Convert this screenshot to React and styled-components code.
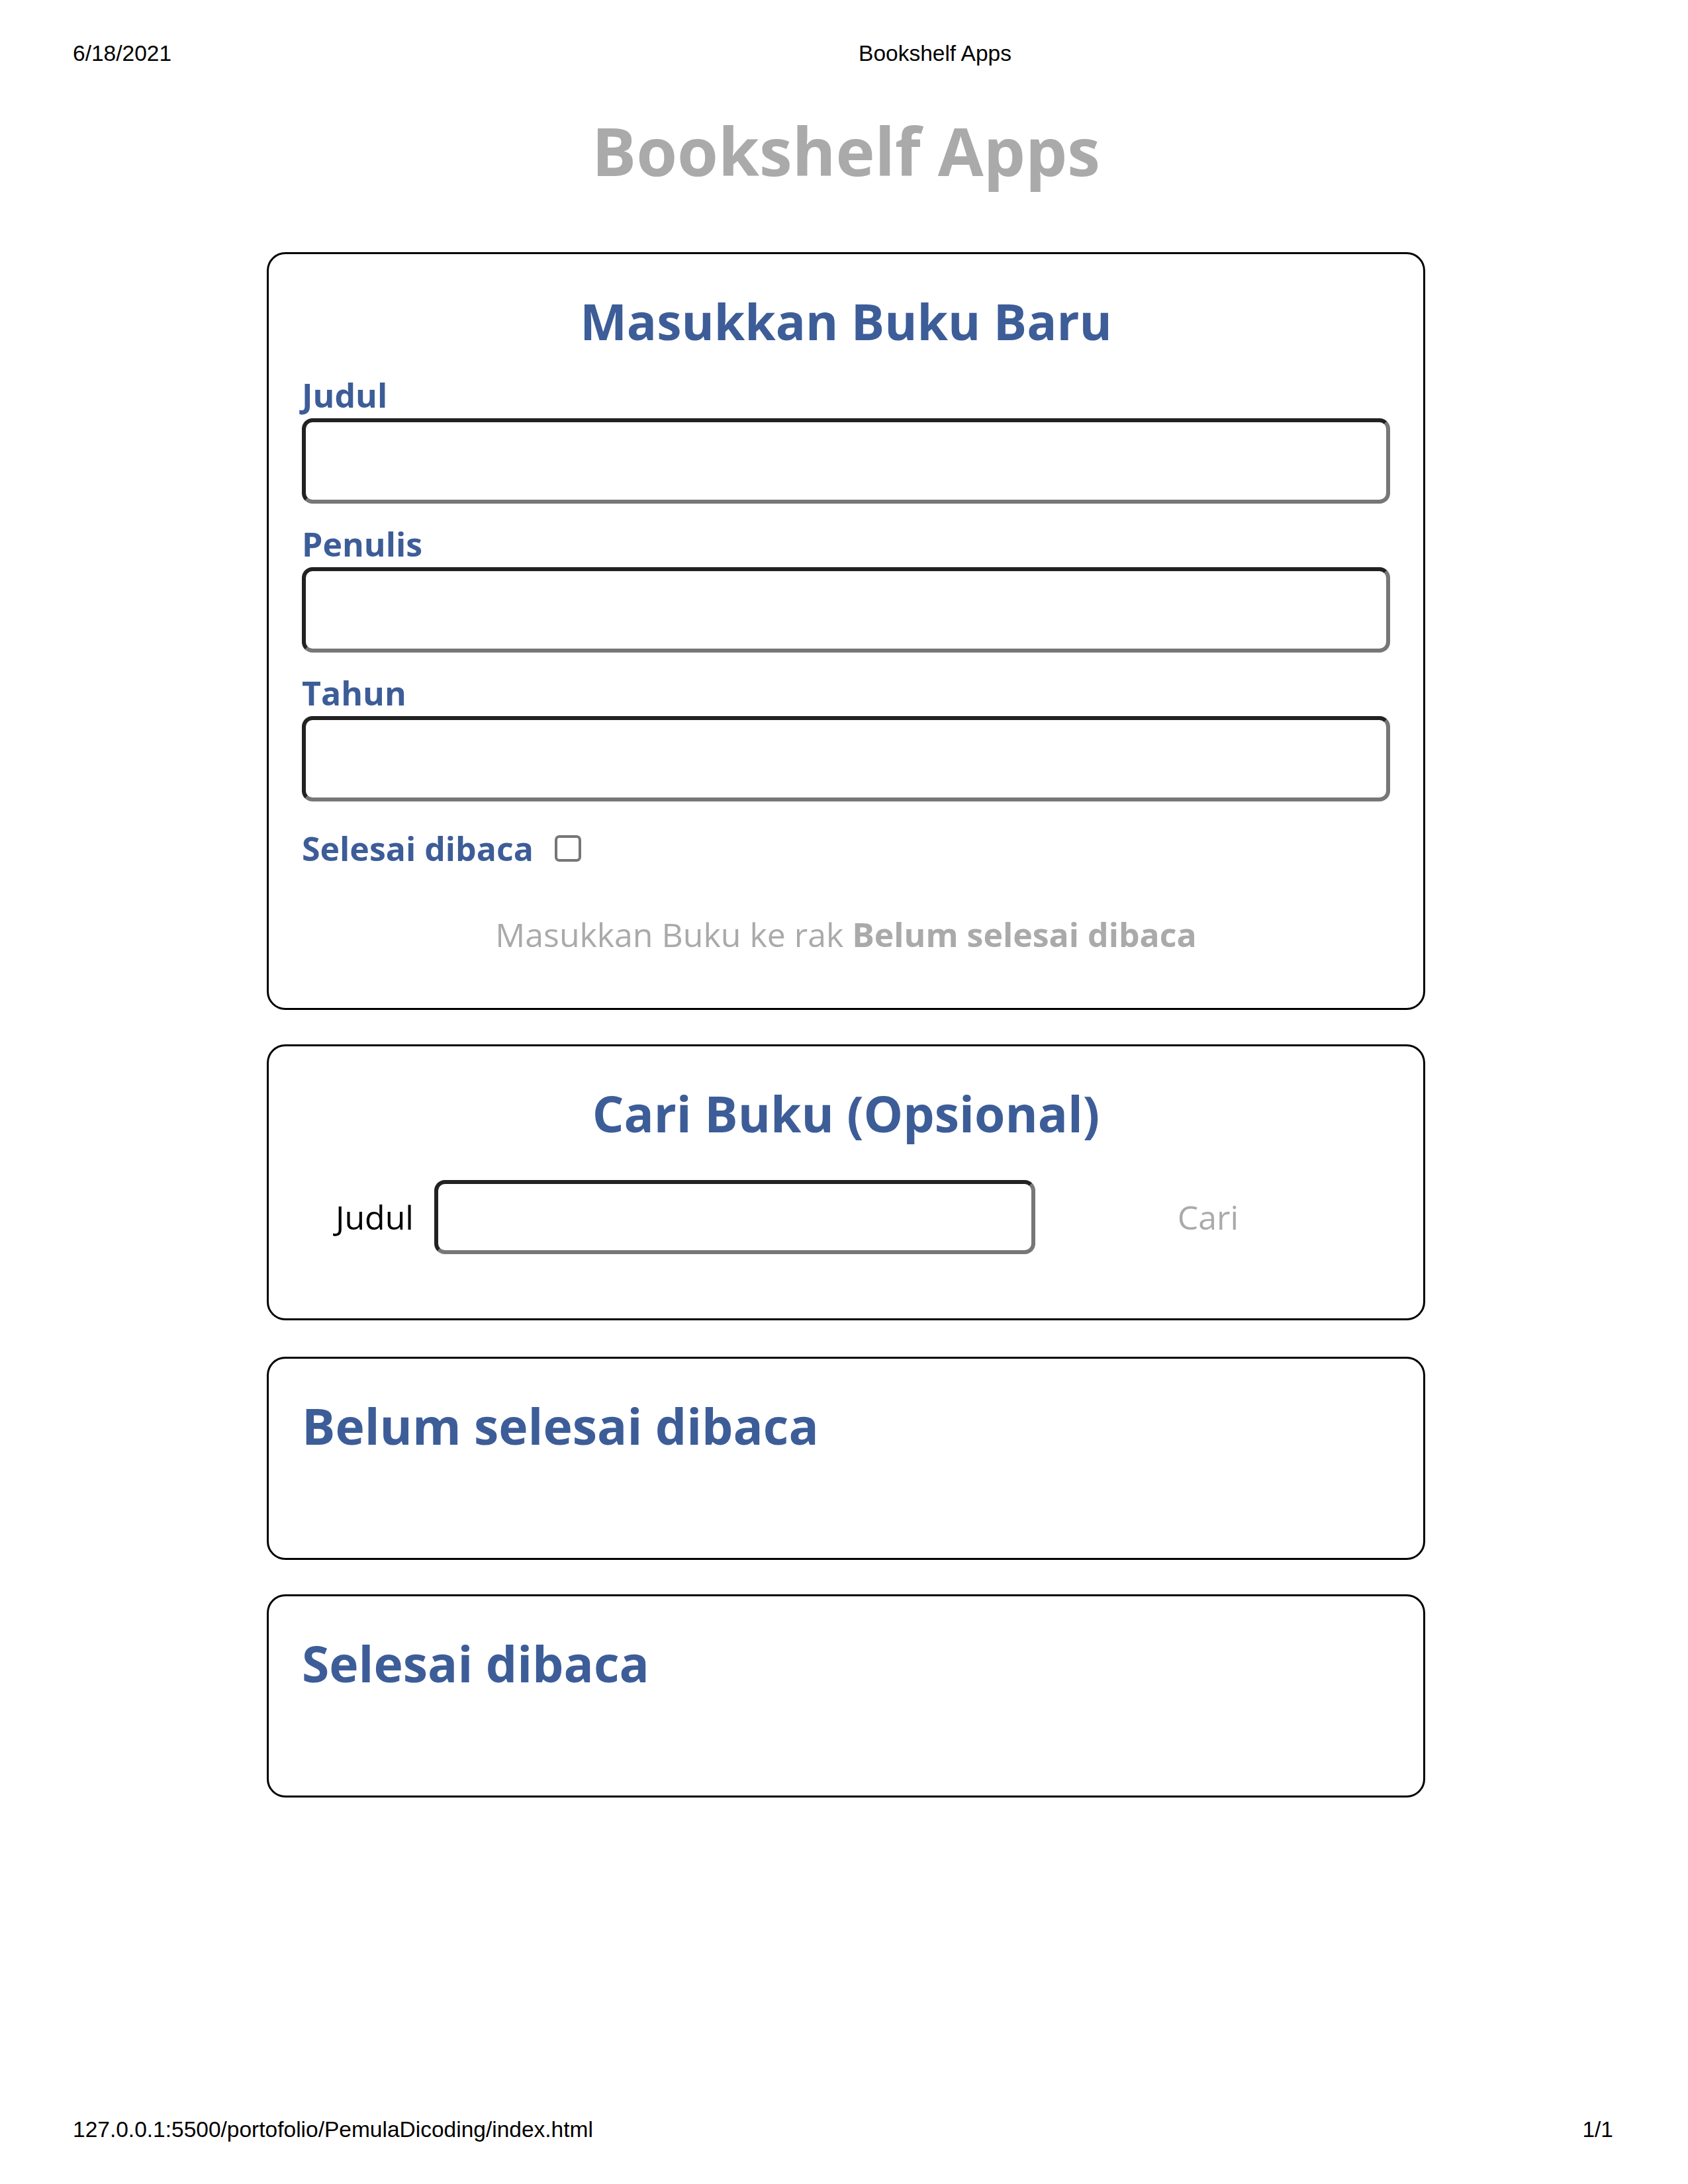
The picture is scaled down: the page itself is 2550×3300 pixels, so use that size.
import React from "react";
import styled, { createGlobalStyle } from "styled-components";

const GlobalStyle = createGlobalStyle`
  * { box-sizing: border-box; }
  html, body { margin: 0; padding: 0; background: #ffffff; }
  body { font-family: "Open Sans", "Liberation Sans", sans-serif; }
`;

const BLUE = "#3d5d98";
const GRAY = "#aaaaaa";

const Page = styled.div`
  width: 2550px;
  height: 3300px;
  display: flex;
  flex-direction: column;
  background: #fff;
`;

const PrintBar = styled.div`
  display: flex;
  align-items: baseline;
  font-family: "Liberation Sans", Arial, sans-serif;
  font-size: 33.5px;
  line-height: 38px;
  color: #000;
  padding: ${(p) => (p.$bottom ? "0 113px 63px 110px" : "62px 110px 0 110px")};
  justify-content: ${(p) => (p.$bottom ? "space-between" : "flex-start")};
`;

const PrintTitle = styled.span`
  margin-left: 1038px;
`;

const Main = styled.main`
  width: 1750px;
  margin: 59px 0 0 403px;
  display: flex;
  flex-direction: column;
`;

const AppTitle = styled.h1`
  margin: 0 0 86px 0;
  font-size: 100px;
  font-weight: 700;
  line-height: 136px;
  color: ${GRAY};
  text-align: center;
`;

const Card = styled.section`
  border: 3px solid #000;
  border-radius: 28px;
  padding: 50px;
  margin-bottom: ${(p) => p.$gap || 52}px;
  display: flex;
  flex-direction: column;
`;

const CardTitle = styled.h2`
  margin: 0;
  font-size: 75px;
  font-weight: 700;
  line-height: 102px;
  color: ${BLUE};
  text-align: ${(p) => (p.$left ? "left" : "center")};
`;

const Field = styled.div`
  display: flex;
  flex-direction: column;
  margin-top: 27px;
`;

const Label = styled.label`
  font-size: 50px;
  font-weight: 700;
  line-height: 68px;
  color: ${BLUE};
`;

const TextInput = styled.input`
  display: block;
  height: ${(p) => p.$h || 129}px;
  margin-top: ${(p) => (p.$w ? 0 : 1)}px;
  border-style: solid;
  border-width: 6px;
  border-color: #222 #777 #777 #222;
  border-radius: 16px;
  background: #fff;
  font-family: "Open Sans", sans-serif;
  font-size: 40px;
  padding: 0 16px;
  width: ${(p) => (p.$w ? `${p.$w}px` : "100%")};
  flex: none;
  outline: none;
`;

const CheckRow = styled.div`
  display: flex;
  align-items: center;
  gap: 32px;
  margin-top: 37px;
`;

const CheckBox = styled.span`
  width: 40px;
  height: 40px;
  border: 4px solid #767676;
  border-radius: 7px;
  background: #fff;
`;

const SubmitButton = styled.button`
  margin-top: 37px;
  padding: 25px 0 26px 0;
  border: none;
  background: transparent;
  font-family: "Open Sans", sans-serif;
  font-size: 50px;
  line-height: 69px;
  color: ${GRAY};
  text-align: center;
  b { font-weight: 700; }
`;

const SearchRow = styled.div`
  display: flex;
  align-items: center;
  margin: 50px 0 47px 0;
  padding-left: 51px;
`;

const SearchLabel = styled.label`
  font-size: 50px;
  font-weight: 400;
  line-height: 68px;
  color: #000;
  margin-right: 31px;
`;

const SearchButton = styled.button`
  width: 440px;
  margin-left: 41px;
  border: none;
  background: transparent;
  font-family: "Open Sans", sans-serif;
  font-size: 50px;
  line-height: 68px;
  color: ${GRAY};
  text-align: center;
  padding: 0;
`;

const BookList = styled.div`
  min-height: 99px;
`;

const Spacer = styled.div`
  flex: 1;
`;

export default function App() {
  return (
    <>
      <GlobalStyle />
      <Page>
        <PrintBar>
          <span>6/18/2021</span>
          <PrintTitle>Bookshelf Apps</PrintTitle>
        </PrintBar>
        <Main>
          <AppTitle>Bookshelf Apps</AppTitle>

          <Card $gap={52}>
            <CardTitle>Masukkan Buku Baru</CardTitle>
            <Field>
              <Label htmlFor="inputBookTitle">Judul</Label>
              <TextInput id="inputBookTitle" type="text" />
            </Field>
            <Field>
              <Label htmlFor="inputBookAuthor">Penulis</Label>
              <TextInput id="inputBookAuthor" type="text" />
            </Field>
            <Field>
              <Label htmlFor="inputBookYear">Tahun</Label>
              <TextInput id="inputBookYear" type="text" />
            </Field>
            <CheckRow>
              <Label>Selesai dibaca</Label>
              <CheckBox />
            </CheckRow>
            <SubmitButton type="button">
              Masukkan Buku ke rak <b>Belum selesai dibaca</b>
            </SubmitButton>
          </Card>

          <Card $gap={55}>
            <CardTitle>Cari Buku (Opsional)</CardTitle>
            <SearchRow>
              <SearchLabel htmlFor="searchBookTitle">Judul</SearchLabel>
              <TextInput id="searchBookTitle" type="text" $w={908} $h={112} />
              <SearchButton type="button">Cari</SearchButton>
            </SearchRow>
          </Card>

          <Card $gap={52}>
            <CardTitle $left>Belum selesai dibaca</CardTitle>
            <BookList />
          </Card>

          <Card $gap={52}>
            <CardTitle $left>Selesai dibaca</CardTitle>
            <BookList />
          </Card>
        </Main>
        <Spacer />
        <PrintBar $bottom>
          <span>127.0.0.1:5500/portofolio/PemulaDicoding/index.html</span>
          <span>1/1</span>
        </PrintBar>
      </Page>
    </>
  );
}
